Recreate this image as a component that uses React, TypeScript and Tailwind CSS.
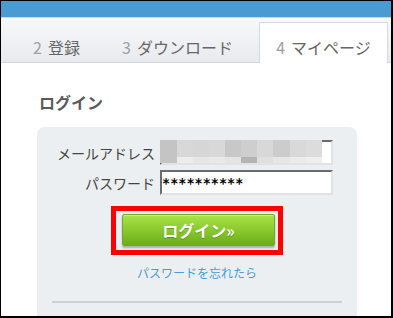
export default function App() {
  const top = [
    'w-[17px] bg-[#c4c4c4]',
    'w-[16px] bg-[#d8d8d8]',
    'w-[16px] bg-[#d6d6d6]',
    'w-[16px] bg-[#d8d8d8]',
    'w-[16px] bg-[#c8c8c8]',
    'w-[16px] bg-[#cecece]',
    'w-[16px] bg-[#d8d8d8]',
    'w-[17px] bg-[#cccccc]',
    'w-[16px] bg-[#d9d9d9]',
    'w-[16px] bg-[#dcdcdc]',
  ];
  const bottom = [
    'w-[17px] bg-[#c4c4c4]',
    'w-[16px] bg-[#ececec]',
    'w-[16px] bg-[#e6e6e6]',
    'w-[16px] bg-[#e9e9e9]',
    'w-[16px] bg-[#e4e4e4]',
    'w-[16px] bg-[#b4b4b4]',
    'w-[16px] bg-[#dedede]',
    'w-[17px] bg-[#e6e6e6]',
    'w-[16px] bg-[#ebebeb]',
    'w-[16px] bg-[#eeeeee]',
  ];
  return (
    <div className="w-[393px] h-[318px] overflow-hidden bg-black pt-px pl-px pr-[2px] pb-[2px] font-['Noto_Sans_CJK_JP',sans-serif]">
      <div className="w-full h-full bg-white overflow-hidden flex flex-col">
        <div className="h-[16px] shrink-0 bg-[#4b9bd3]" />
        <div className="h-px shrink-0 bg-[#c9d5e3]" />
        <div className="h-[45px] shrink-0 flex items-end bg-gradient-to-b from-[#f7f8f9] to-[#e8eaee] border-b border-[#d0d6df]">
          <div className="w-[121px] h-[41px] -mb-px pt-[17px] pl-[32px] text-[16px] leading-[16px] whitespace-nowrap">
            <span className="text-[#a0a0a0]">2</span>
            <span className="ml-[6px] text-[#666]">登録</span>
          </div>
          <div className="w-[137px] h-[41px] -mb-px pt-[17px] text-[16px] leading-[16px] whitespace-nowrap">
            <span className="text-[#a0a0a0]">3</span>
            <span className="ml-[6px] text-[#666]">ダウンロード</span>
          </div>
          <div className="w-[129px] h-[41px] -mb-px pt-[16px] bg-white border-x border-t border-[#d3dae3] text-center text-[16px] leading-[16px] whitespace-nowrap">
            <span className="text-[#a0a0a0]">4</span>
            <span className="ml-[6px] text-[#666]">マイページ</span>
          </div>
        </div>

        <div className="mt-[31px] ml-[38px] text-[16px] leading-[16px] font-bold text-[#5a5a5a]">ログイン</div>

        <div className="mt-[17px] ml-[36px] w-[320px] flex-1 rounded-t-[8px] bg-[#eceff2] pt-[13px] flex flex-col">
          <div className="flex items-center h-[25px]">
            <div className="w-[118px] text-right text-[14px] leading-[14px] text-[#444] whitespace-nowrap">メールアドレス</div>
            <div className="relative ml-[5px] w-[173px] h-[25px] bg-white border-2 border-t-[#6b6b6b] border-l-[#6b6b6b] border-b-[#e2e2e2] border-r-[#e2e2e2]">
              <div className="absolute -top-[2px] -left-[2px] flex flex-col">
                <div className="flex h-[17px]">
                  {top.map((c, i) => (
                    <div key={i} className={c} />
                  ))}
                </div>
                <div className="flex h-[6px]">
                  {bottom.map((c, i) => (
                    <div key={i} className={c} />
                  ))}
                </div>
              </div>
            </div>
          </div>
          <div className="mt-[5px] flex items-center h-[25px]">
            <div className="w-[118px] text-right text-[14px] leading-[14px] text-[#444] whitespace-nowrap">パスワード</div>
            <div className="ml-[5px] w-[173px] h-[25px] bg-white border-2 border-t-[#6b6b6b] border-l-[#6b6b6b] border-b-[#e2e2e2] border-r-[#e2e2e2] flex items-center">
              <span className="font-['DejaVu_Sans_Mono',monospace] font-bold text-[13.5px] leading-[14px] text-black">**********</span>
            </div>
          </div>

          <div className="mt-[11px] flex justify-center">
            <div className="border-[5px] border-[#ff0000] pl-[6px] pr-[3px] pt-[3px] pb-[4px]">
              <div className="w-[153px] h-[32px] rounded-[2px] border border-[#72a82c] bg-gradient-to-b from-[#a9e447] to-[#6cae12] shadow-[0_2px_2px_rgba(0,0,0,0.28),inset_0_1px_0_rgba(255,255,255,0.35)] flex items-center justify-center text-white text-[16px] leading-[16px] font-bold [text-shadow:0_1px_1px_rgba(0,0,0,0.25)] whitespace-nowrap">
                ログイン»
              </div>
            </div>
          </div>

          <div className="mt-[12px] text-center text-[12px] leading-[12px] text-[#4c9bd2] whitespace-nowrap">パスワードを忘れたら</div>

          <div className="mt-[22px] mx-[15px] h-[2px] bg-[#cdd1d5]" />
        </div>
      </div>
    </div>
  );
}
